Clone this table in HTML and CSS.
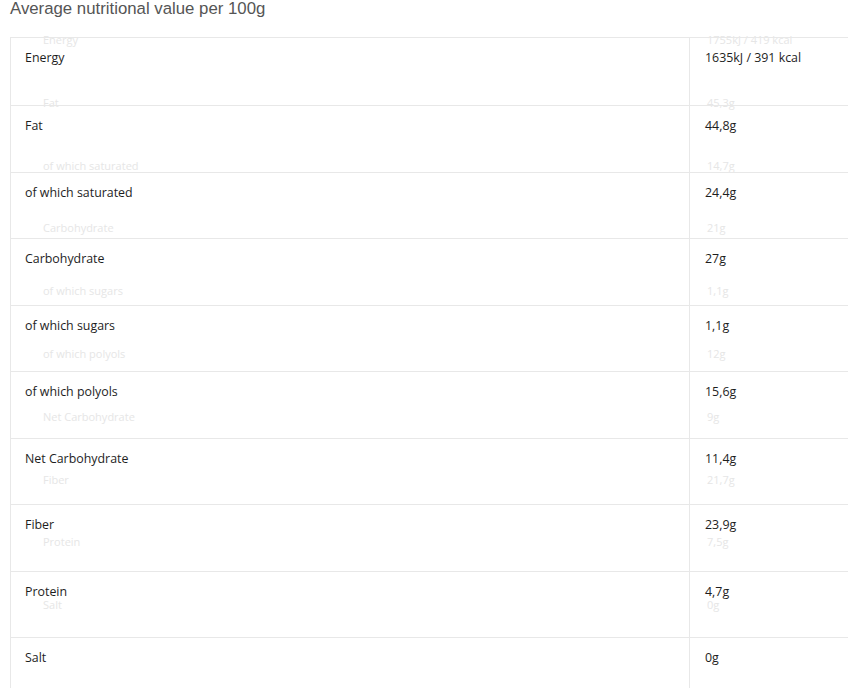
FILE: index.html
```html
<!DOCTYPE html>
<html>
<head>
<meta charset="utf-8">
<link rel="stylesheet" href="styles.css">
</head>
<body>
<div class="page">
  <h2 class="title">Average nutritional value per 100g</h2>
  <div class="wrap">
    <table class="nutri">
      <tr><td class="lbl">Energy</td><td class="val">1635kJ / 391 kcal</td></tr>
      <tr><td class="lbl">Fat</td><td class="val">44,8g</td></tr>
      <tr><td class="lbl">of which saturated</td><td class="val">24,4g</td></tr>
      <tr><td class="lbl">Carbohydrate</td><td class="val">27g</td></tr>
      <tr><td class="lbl">of which sugars</td><td class="val">1,1g</td></tr>
      <tr><td class="lbl">of which polyols</td><td class="val">15,6g</td></tr>
      <tr><td class="lbl">Net Carbohydrate</td><td class="val">11,4g</td></tr>
      <tr><td class="lbl">Fiber</td><td class="val">23,9g</td></tr>
      <tr><td class="lbl">Protein</td><td class="val">4,7g</td></tr>
      <tr><td class="lbl">Salt</td><td class="val">0g</td></tr>
    </table>
    <div class="ghost">
      <div class="grow"><span class="glbl">Energy</span><span class="gval">1755kJ / 419 kcal</span></div>
      <div class="grow"><span class="glbl">Fat</span><span class="gval">45,3g</span></div>
      <div class="grow"><span class="glbl">of which saturated</span><span class="gval">14,7g</span></div>
      <div class="grow"><span class="glbl">Carbohydrate</span><span class="gval">21g</span></div>
      <div class="grow"><span class="glbl">of which sugars</span><span class="gval">1,1g</span></div>
      <div class="grow"><span class="glbl">of which polyols</span><span class="gval">12g</span></div>
      <div class="grow"><span class="glbl">Net Carbohydrate</span><span class="gval">9g</span></div>
      <div class="grow"><span class="glbl">Fiber</span><span class="gval">21,7g</span></div>
      <div class="grow"><span class="glbl">Protein</span><span class="gval">7,5g</span></div>
      <div class="grow"><span class="glbl">Salt</span><span class="gval">0g</span></div>
    </div>
  </div>
</div>
</body>
</html>
```
FILE: styles.css
```css
html, body {
  margin: 0;
  padding: 0;
  background: #fff;
  overflow: hidden;
}
.page {
  padding: 0 0 0 10px;
  width: 900px;
}
.title {
  margin: 0;
  font-family: "Liberation Sans", Arial, sans-serif;
  font-weight: normal;
  font-size: 16.8px;
  line-height: 18px;
  color: #555;
  padding-bottom: 19px;
}
.wrap {
  position: relative;
}
.nutri {
  border-collapse: collapse;
  width: 880px;
  font-family: "Open Sans", sans-serif;
  font-size: 12.4px;
  color: #1e1e1e;
  position: relative;
  z-index: 1;
}
.nutri td {
  border-top: 1px solid #e8e8e8;
  vertical-align: top;
  padding: 11px 14px 0 14px;
  height: 54.5px;
  line-height: 17px;
}
.nutri tr:first-child td {
  height: 56px;
}
.nutri td.lbl {
  width: 650px;
  border-left: 1px solid #e8e8e8;
  border-right: 1px solid #e8e8e8;
}
.nutri td.val {
  padding-left: 15px;
}
.ghost {
  position: absolute;
  left: 33px;
  top: -4px;
  z-index: 0;
  font-family: "Open Sans", sans-serif;
  font-size: 11px;
  color: #e6e6e6;
  width: 800px;
}
.grow {
  display: flex;
  height: 62.8px;
  line-height: 14px;
}
.glbl {
  width: 664px;
}
```
